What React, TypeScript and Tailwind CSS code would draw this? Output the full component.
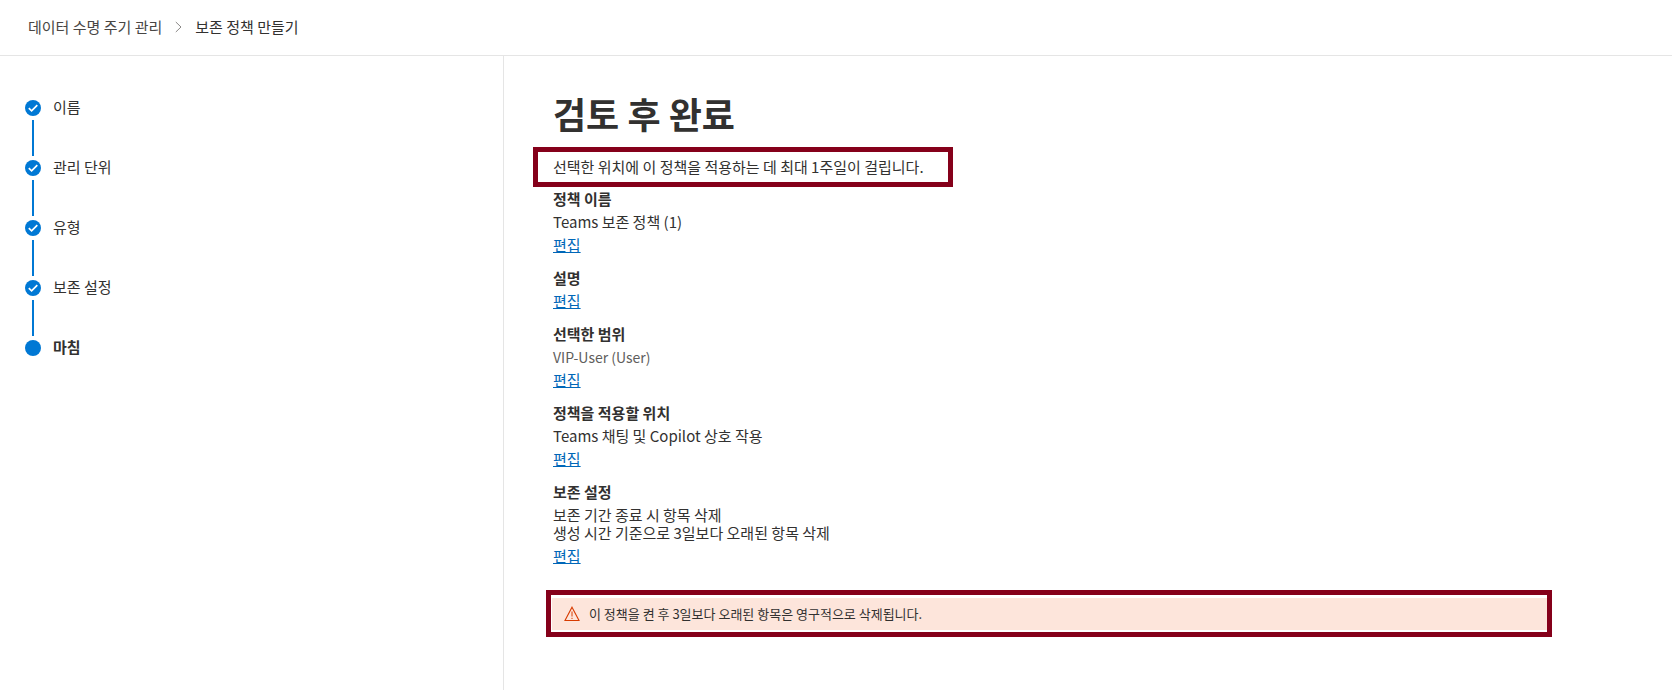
import clsx from "clsx";

const steps = [
  { label: "이름", done: true },
  { label: "관리 단위", done: true },
  { label: "유형", done: true },
  { label: "보존 설정", done: true },
  { label: "마침", done: false }
];

const sections = [
  { title: "정책 이름", lines: ["Teams 보존 정책 (1)"] },
  { title: "설명", lines: [] },
  { title: "선택한 범위", lines: ["VIP-User (User)"], muted: true },
  { title: "정책을 적용할 위치", lines: ["Teams 채팅 및 Copilot 상호 작용"] },
  {
    title: "보존 설정",
    lines: ["보존 기간 종료 시 항목 삭제", "생성 시간 기준으로 3일보다 오래된 항목 삭제"]
  }
];

function StepMarker({ done }: { done: boolean }) {
  return (
    <svg width="16" height="16" viewBox="0 0 16 16" fill="none" aria-hidden="true">
      <circle cx="8" cy="8" r="8" fill="#0078d4" />
      {done && <path d="M3.8 8.2 6.6 10.8 12.3 5.2" stroke="#fff" strokeWidth="1.7" />}
    </svg>
  );
}

function WarningIcon() {
  return (
    <svg
      className="shrink-0"
      width="16"
      height="16"
      viewBox="0 0 16 16"
      fill="none"
      stroke="#d83b01"
      aria-hidden="true"
    >
      <path d="M8 1.2 15 14.5H1Z" strokeWidth="1.1" />
      <path d="M8 5.5v5M8 11.8v1.2" />
    </svg>
  );
}

function Breadcrumb() {
  return (
    <nav className="flex h-14 items-center gap-[13px] border-b border-[#e5e5e5] px-7 pb-[2px]">
      <a href="#" className="text-[#484644]">
        데이터 수명 주기 관리
      </a>
      <svg width="7" height="12" viewBox="0 0 7 12" fill="none" stroke="#8a8886" aria-hidden="true">
        <path d="M.8 1 6 6 .8 11" />
      </svg>
      <span aria-current="page">보존 정책 만들기</span>
    </nav>
  );
}

function Steps() {
  return (
    <ol className="px-[25px] pt-11">
      {steps.map((step, index) => (
        <li key={step.label} className="flex gap-3">
          <div className="flex w-4 flex-col items-center gap-1">
            <StepMarker done={step.done} />
            {index < steps.length - 1 && <div className="mb-1 h-9 w-[2px] bg-[#0078d4]" />}
          </div>
          <span className={clsx("leading-[14px]", !step.done && "font-bold")}>{step.label}</span>
        </li>
      ))}
    </ol>
  );
}

export default function App() {
  return (
    <div className="flex min-h-screen flex-col bg-white font-['Noto_Sans_CJK_KR',sans-serif] text-[15px] leading-[18px] text-[#323130]">
      <Breadcrumb />

      <div className="flex flex-1">
        <aside className="w-[504px] shrink-0 border-r border-[#e5e5e5]">
          <Steps />
        </aside>

        <main className="min-w-0 flex-1 pt-[35px] pr-[120px] pb-12 pl-[49px]">
          <h1 className="mb-3 text-[36px] leading-[44px] font-bold">검토 후 완료</h1>

          <p className="-ml-5 w-[420px] max-w-full border-5 border-[#85001a] px-[15px] py-[6px]">
            선택한 위치에 이 정책을 적용하는 데 최대 1주일이 걸립니다.
          </p>

          <div className="mt-[3px] flex flex-col gap-[15px]">
            {sections.map((section) => (
              <section key={section.title} className="flex flex-col items-start gap-[5px]">
                <h2 className="font-bold">{section.title}</h2>
                {section.lines.length > 0 && (
                  <div className={clsx(section.muted && "text-[14px] text-[#605e5c]")}>
                    {section.lines.map((line) => (
                      <p key={line}>{line}</p>
                    ))}
                  </div>
                )}
                <a href="#" className="text-[#0067b8] underline">
                  편집
                </a>
              </section>
            ))}
          </div>

          <div className="mt-[25px] -ml-[7px] border-5 border-[#85001a] pt-[3px] pb-[2px] pl-px">
            <div
              role="alert"
              className="flex h-8 items-center gap-[9px] bg-[#fde5db] px-3 text-[13px]"
            >
              <WarningIcon />
              <p>이 정책을 켠 후 3일보다 오래된 항목은 영구적으로 삭제됩니다.</p>
            </div>
          </div>
        </main>
      </div>
    </div>
  );
}
